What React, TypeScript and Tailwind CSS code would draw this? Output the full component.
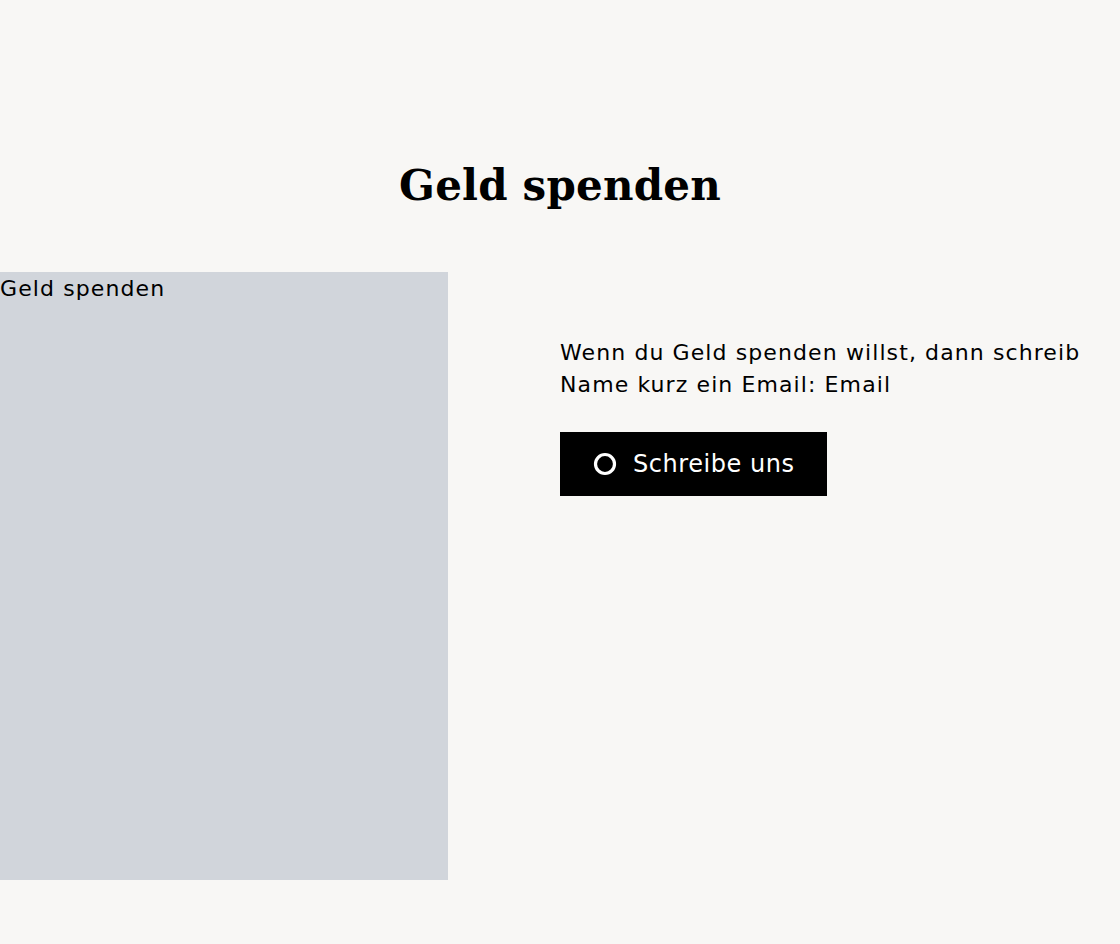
export default function App() {
  return (
    <div
      className="min-h-[944px] bg-[#f8f7f5] text-black"
      style={{ fontFamily: '"DejaVu Sans", sans-serif' }}
    >
      <section className="pt-[154px] pb-16">
        <h2
          className="text-center text-[42px] font-bold leading-[64px] tracking-[0.2px]"
          style={{ fontFamily: '"DejaVu Serif", serif' }}
        >
          Geld spenden
        </h2>
        <div className="mt-[54px] flex">
          <div className="h-[608px] w-[448px] shrink-0 bg-[#d1d5db]">
            <span className="block pt-px text-[22px] leading-8 tracking-[1.1px]">Geld spenden</span>
          </div>
          <div className="ml-[112px] flex flex-col items-start pt-[65px]">
            <p className="text-[22px] leading-8 tracking-[1.1px]">
              Wenn du Geld spenden willst, dann schreib
              <br />
              Name kurz ein Email: Email
            </p>
            <button className="mt-[31px] flex h-16 items-center gap-4 bg-black pl-[33px] pr-8 text-[24px] tracking-[0.55px] text-white">
              <svg width="24" height="24" viewBox="0 0 24 24" fill="none">
                <circle cx="12" cy="12" r="9.5" stroke="white" strokeWidth="3.2" />
              </svg>
              Schreibe uns
            </button>
          </div>
        </div>
      </section>
    </div>
  );
}
